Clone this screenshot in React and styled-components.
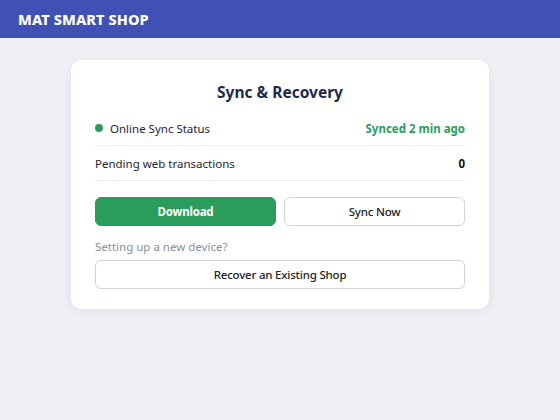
import React from 'react';
import styled, { createGlobalStyle } from 'styled-components';

const Global = createGlobalStyle`
  html, body {
    margin: 0;
    padding: 0;
    background: #eef0f5;
    font-family: 'Noto Sans', 'Open Sans', sans-serif;
  }
  * { box-sizing: border-box; }
`;

const Page = styled.div`
  min-height: 420px;
  background: #eef0f5;
`;

const Header = styled.header`
  height: 38px;
  background: #3f51b5;
  display: flex;
  align-items: center;
  padding: 0 18px;
  h1 {
    margin: 0;
    color: #fff;
    font-size: 14.5px;
    font-weight: 800;
    letter-spacing: 0.1px;
  }
`;

const Main = styled.main`
  display: flex;
  justify-content: center;
  padding-top: 22px;
`;

const Card = styled.section`
  width: 418px;
  background: #fff;
  border-radius: 10px;
  box-shadow: 0 2px 10px rgba(30, 40, 80, 0.08);
  padding: 21px 24px 20px;
`;

const Title = styled.h2`
  margin: 0 0 8px;
  text-align: center;
  font-size: 15.5px;
  font-weight: 700;
  color: #1e2a4a;
`;

const Row = styled.div`
  display: flex;
  align-items: center;
  justify-content: space-between;
  height: 35px;
  border-bottom: 1px solid #eef0f3;
  font-size: 11.5px;
  color: #1f2430;
`;

const Label = styled.span`
  display: flex;
  align-items: center;
  gap: 7px;
`;

const Dot = styled.i`
  width: 8px;
  height: 8px;
  border-radius: 50%;
  background: #2a9d5c;
`;

const Value = styled.span`
  font-weight: 700;
  color: ${p => (p.green ? '#2a9d5c' : '#111')};
`;

const Buttons = styled.div`
  display: grid;
  grid-template-columns: 1fr 1fr;
  gap: 8px;
  margin-top: 16px;
`;

const Button = styled.button`
  height: 29px;
  border-radius: 6px;
  font-family: inherit;
  font-size: 11.5px;
  font-weight: ${p => (p.primary ? 700 : 500)};
  letter-spacing: -0.2px;
  color: ${p => (p.primary ? '#fff' : '#222')};
  background: ${p => (p.primary ? '#2a9d5c' : '#fff')};
  border: 1px solid ${p => (p.primary ? '#2a9d5c' : '#cfd3da')};
  width: 100%;
`;

const Hint = styled.p`
  margin: 13px 0 6px;
  font-size: 11.5px;
  color: #8b8f98;
`;

export default function App() {
  return (
    <Page>
      <Global />
      <Header>
        <h1>MAT SMART SHOP</h1>
      </Header>
      <Main>
        <Card>
          <Title>Sync &amp; Recovery</Title>
          <Row>
            <Label>
              <Dot />
              Online Sync Status
            </Label>
            <Value green>Synced 2 min ago</Value>
          </Row>
          <Row>
            <Label>Pending web transactions</Label>
            <Value>0</Value>
          </Row>
          <Buttons>
            <Button primary>Download</Button>
            <Button>Sync Now</Button>
          </Buttons>
          <Hint>Setting up a new device?</Hint>
          <Button>Recover an Existing Shop</Button>
        </Card>
      </Main>
    </Page>
  );
}
